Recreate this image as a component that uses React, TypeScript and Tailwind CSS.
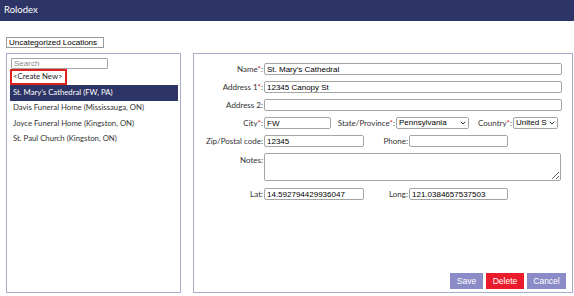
import { ChevronDown } from 'lucide-react';

const locations = [
  'St. Mary\u2019s Cathedral (FW, PA)',
  'Davis Funeral Home (Mississauga, ON)',
  'Joyce Funeral Home (Kingston, ON)',
  'St. Paul Church (Kingston, ON)',
];

const inputCls =
  "block h-[12px] border border-[#a5a5a5] rounded-[2px] bg-white px-[2px] text-[8px] leading-none text-black font-['Liberation_Sans',Arial,sans-serif] outline-none";

function Label({ text, required, className = '' }: { text: string; required?: boolean; className?: string }) {
  return (
    <span className={`text-right text-[8px] leading-none text-[#333] whitespace-nowrap pr-[1px] ${className}`}>
      {text}
      {required && <span className="text-[#e0201c]">*</span>}:
    </span>
  );
}

function Select({ value, className = '' }: { value: string; className?: string }) {
  return (
    <div className={`relative flex items-center overflow-hidden ${inputCls} ${className}`}>
      <span className="whitespace-nowrap overflow-hidden pr-[9px]">{value}</span>
      <span className="absolute right-0 top-0 h-full w-[10px] bg-white flex items-center justify-center">
        <ChevronDown className="w-[8px] h-[8px] text-[#333]" strokeWidth={3} />
      </span>
    </div>
  );
}

export default function App() {
  return (
    <div className="w-[574px] h-[296px] bg-white overflow-hidden font-['Lato','Noto_Sans',sans-serif]">
      {/* Header */}
      <header className="h-[21px] bg-[#2d3566] flex items-center px-[4px]">
        <span className="text-white text-[9.5px]">Rolodex</span>
      </header>

      {/* Category */}
      <div className="pt-[16px] pl-[6px]">
        <div className="w-[98px] h-[11px] border border-[#9a9a9a] flex items-center px-[2px] text-[8px] leading-none text-black font-['Liberation_Sans',Arial,sans-serif]">
          Uncategorized Locations
        </div>
      </div>

      {/* Main */}
      <div className="flex gap-[12px] pl-[6px] pt-[5px]">
        {/* Left list */}
        <div className="w-[175px] h-[240px] border border-[#a9abcb] px-[3px] pt-[4px]">
          <input
            placeholder="Search"
            className="block ml-[1px] w-[97px] h-[11px] border border-[#a5a5a5] rounded-[1px] px-[2px] text-[8px] leading-none outline-none placeholder:text-[#8a8a8a] font-['Liberation_Sans',Arial,sans-serif]"
          />
          <div className="w-[57px] h-[16px] border-2 border-[#e0201c] flex items-center px-[1px] text-[7.75px] leading-none text-[#222] whitespace-nowrap">
            &lt;Create New&gt;
          </div>
          <ul className="text-[7.75px] text-[#333]">
            {locations.map((loc, i) => (
              <li
                key={loc}
                className={`h-[15.5px] flex items-center pl-[3px] whitespace-nowrap ${i === 0 ? 'bg-[#2d3566] text-white w-[168px]' : ''}`}
              >
                {loc}
              </li>
            ))}
          </ul>
        </div>

        {/* Right form */}
        <div className="w-[380px] h-[240px] border border-[#a9abcb] flex flex-col pt-[9px] pb-[3px] pr-[6px]">
          <div className="flex flex-col gap-[6px]">
            <div className="flex items-center">
              <Label text="Name" required className="w-[70px]" />
              <input className={`${inputCls} w-[298px]`} defaultValue="St. Mary's Cathedral" />
            </div>
            <div className="flex items-center">
              <Label text="Address 1" required className="w-[70px]" />
              <input className={`${inputCls} w-[298px]`} defaultValue="12345 Canopy St" />
            </div>
            <div className="flex items-center">
              <Label text="Address 2" className="w-[70px]" />
              <input className={`${inputCls} w-[298px]`} />
            </div>
            <div className="flex items-center">
              <Label text="City" required className="w-[70px]" />
              <input className={`${inputCls} w-[67px]`} defaultValue="FW" />
              <Label text="State/Province" required className="w-[65px]" />
              <Select value="Pennsylvania" className="w-[73px]" />
              <Label text="Country" required className="w-[44px]" />
              <Select value="United States" className="w-[45px]" />
            </div>
            <div className="flex items-center">
              <Label text="Zip/Postal code" className="w-[70px]" />
              <input className={`${inputCls} w-[100px]`} defaultValue="12345" />
              <Label text="Phone" className="w-[45px]" />
              <input className={`${inputCls} w-[99px]`} />
            </div>
            <div className="flex items-start">
              <Label text="Notes" className="w-[70px] pt-[3px]" />
              <textarea className="block w-[297px] h-[28px] border border-[#a5a5a5] rounded-[2px] outline-none text-[8px]" />
            </div>
            <div className="flex items-center mt-[1px]">
              <Label text="Lat" className="w-[70px]" />
              <input className={`${inputCls} w-[100px]`} defaultValue="14.592794429936047" />
              <Label text="Long" className="w-[45px]" />
              <input className={`${inputCls} w-[99px]`} defaultValue="121.0384657537503" />
            </div>
          </div>

          <div className="mt-auto flex justify-end gap-[3px] font-['Liberation_Sans',Arial,sans-serif] text-[8.5px] text-white">
            <button className="w-[33px] h-[16px] bg-[#8b8cc7]">Save</button>
            <button className="w-[38px] h-[16px] bg-[#ea1c2c]">Delete</button>
            <button className="w-[39px] h-[16px] bg-[#8b8cc7]">Cancel</button>
          </div>
        </div>
      </div>
    </div>
  );
}
